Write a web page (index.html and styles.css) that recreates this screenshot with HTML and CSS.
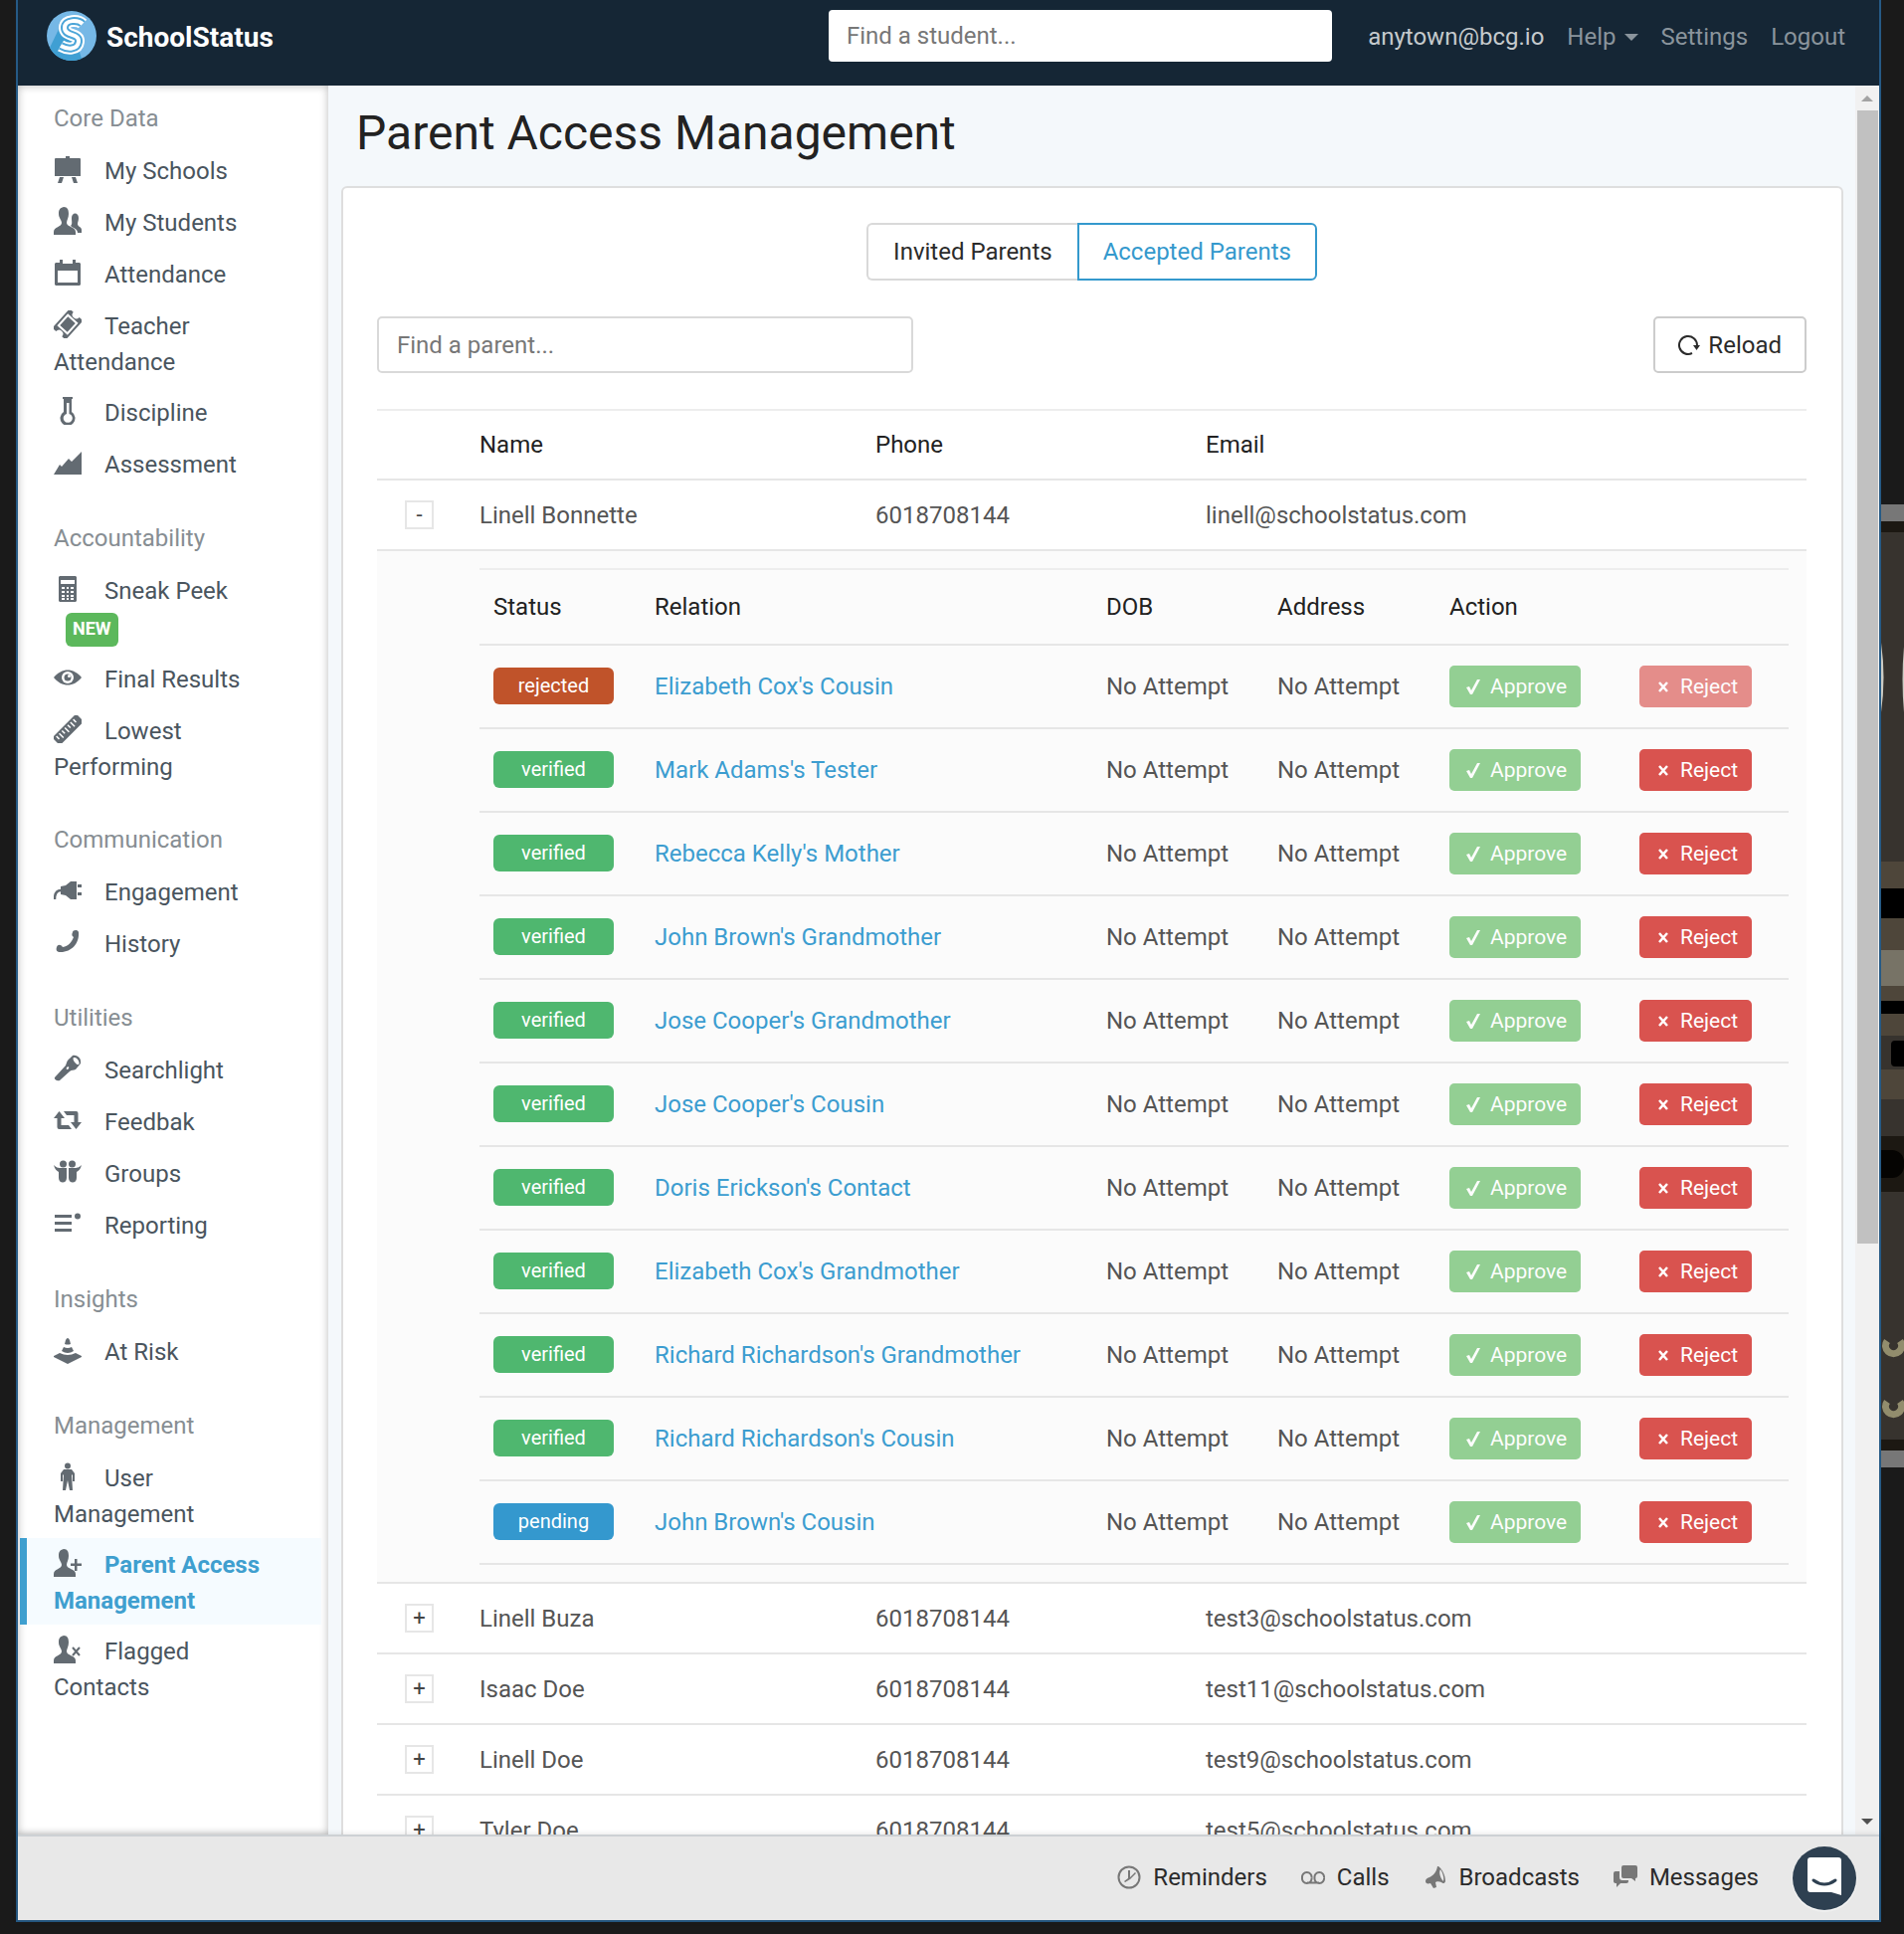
FILE: index.html
```html
<!DOCTYPE html>
<html lang="en">
<head>
<meta charset="utf-8">
<title>Parent Access Management - SchoolStatus</title>
<link rel="stylesheet" href="styles.css">
</head>
<body>
<svg class="sprite" aria-hidden="true">
  <symbol id="i-easel" viewBox="0 0 28 28"><path d="M12 1h4v2h10a1 1 0 0 1 1 1v17H1V4a1 1 0 0 1 1-1h10zM6 22h4l-2 6H4zM18 22h4l2 6h-4z"/></symbol>
  <symbol id="i-users" viewBox="0 0 28 28"><path d="M10 0c4 0 5 3 5 7 0 4-2 6-2 9 0 4 9 4 9 9v3H0v-3c0-5 8-5 8-9 0-3-3-5-3-9 0-4 1-6 5-7zM18 11c0-6 7-6 7 0 0 3-1 4-1 6 0 3 4 3 4 6v3h-4c0-4-5-5-7-7 2-2 1-4 1-8z"/></symbol>
  <symbol id="i-calendar" viewBox="0 0 28 28"><path fill-rule="evenodd" d="M6 1h3v4h10V1h3v3h4l1 1v21l-1 1H2l-1-1V5l1-1h4zM4 12v12h20V12z"/></symbol>
  <symbol id="i-ticket" viewBox="0 0 28 28"><g transform="rotate(-48 14 14)"><path fill-rule="evenodd" d="M1 5h26v5a4 4 0 0 0 0 8v5H1v-5a4 4 0 0 0 0-8zM6 7v14h16V7zM8 9h12v10H8z"/></g></symbol>
  <symbol id="i-thermo" viewBox="0 0 28 28"><path fill-rule="evenodd" d="M9 0h10v2h-1v13a7.500 7.500 0 1 1-8 0V2H9zM13 6v11a4.500 4.500 0 1 0 2.500 0V6z"/></symbol>
  <symbol id="i-chart" viewBox="0 0 28 28"><path d="M0 26l6-10 2 2 7-8 3 3L28 3v23z"/></symbol>
  <symbol id="i-calc" viewBox="0 0 28 28"><path d="M6 1h16l1 1v24l-1 1H6l-1-1V2z"/><path fill="#fff" d="M7 5h14v4H7zM8 12h3v2H8zm5 0h2v2h-2zm4 0h3v2h-3zM8 16h3v2H8zm5 0h2v2h-2zm4 0h3v2h-3zM8 20h3v2H8zm5 0h2v2h-2zm4 0h3v2h-3zM8 23h3v2H8zm5 0h2v2h-2zm4 0h3v2h-3z"/></symbol>
  <symbol id="i-eye" viewBox="0 0 28 28"><path d="M0 14C8 4 20 4 28 14C20 24 8 24 0 14z"/><circle cx="14" cy="14" r="6" fill="#fff"/><circle cx="14" cy="14" r="3.500"/><circle cx="15.500" cy="12.500" r="1.500" fill="#fff"/></symbol>
  <symbol id="i-ruler" viewBox="0 0 28 28"><g transform="rotate(-45 14 14)"><rect x="-3" y="9" width="34" height="11" rx="1"/><path stroke="#fff" stroke-width="1.500" d="M1 11v4M5 11v6M9 11v4M13 11v6M17 11v4M21 11v6M25 11v4"/></g></symbol>
  <symbol id="i-plug" viewBox="0 0 28 28"><path d="M7 10l5-1 5-4h6v18h-6l-5-4-5-1zM24 8h4v3h-4zM24 16h4v3h-4z"/><path d="M7 14c-4 0-6 3-6 9" fill="none" stroke="currentColor" stroke-width="2.500"/></symbol>
  <symbol id="i-phone" viewBox="0 0 28 28"><path d="M19 4c0-2 5-3 6 0 1 11-7 20-18 20-4 0-5-2-4-5 1-3 4-3 6 0 6-1 9-5 11-10-2-1-2-3-1-5z"/></symbol>
  <symbol id="i-torch" viewBox="0 0 28 28"><path fill-rule="evenodd" d="M1 23l11-12c1-2 1-5 4-7l3-3c5-1 9 3 8 8l-5 6c-2 1-4 0-6 2L6 26c-2 1-6-1-5-3zM20 3c-2 2 3 8 5 7s-1-8-5-7zM13 13c-1 2 1 3 2 1s-1-2-2-1z"/></symbol>
  <symbol id="i-loop" viewBox="0 0 28 28"><path d="M5.500 5l5.500 7H7.500v7H15l3 4H5.500q-2 0-2-2v-9H0zM22.500 23L17 16h3.500V9H13L10 5h12.500q2 0 2 2v9H28z"/></symbol>
  <symbol id="i-groups" viewBox="0 0 28 28"><circle cx="9.500" cy="6" r="3.500"/><circle cx="18.500" cy="6" r="3.500"/><path d="M0 7c3 3 5 3 7 3h6v10c0 6-8 6-8 0v-6C3 13 1 11 0 7zM28 7c-3 3-5 3-7 3h-6v10c0 6 8 6 8 0v-6c2-1 4-3 5-7z"/></symbol>
  <symbol id="i-report" viewBox="0 0 28 28"><path d="M1 5h17v3H1zM1 12h17v3H1zM1 19h17v3H1z"/><circle cx="24" cy="6.500" r="3"/></symbol>
  <symbol id="i-cone" viewBox="0 0 28 28"><path d="M11 8l1-4q2-4 4 0l1 4q-3 1-6 0zM8 15l2-4q4 2 8 0l2 4q-6 4-12 0zM0 20l6-3q8 4 16 0l6 3v1l-14 7L0 21z"/></symbol>
  <symbol id="i-person" viewBox="0 0 28 28"><circle cx="14" cy="3.500" r="3"/><path d="M10 7h8l3 4v8h-2v-6l-1-1 1 16h-3l-2-10-2 10H9l1-16-1 1v6H7v-8z"/></symbol>
  <symbol id="i-user-add" viewBox="0 0 28 28"><path d="M10 0c4 0 5 3 5 7 0 4-2 6-2 9 0 4 9 4 9 9v3H0v-3c0-5 8-5 8-9 0-3-3-5-3-9 0-4 1-6 5-7zM21 10h2.500v4.500H28V17h-4.500v5H21v-5h-4v-2.500h4z"/></symbol>
  <symbol id="i-user-x" viewBox="0 0 28 28"><path d="M10 0c4 0 5 3 5 7 0 4-2 6-2 9 0 4 9 4 9 9v3H0v-3c0-5 8-5 8-9 0-3-3-5-3-9 0-4 1-6 5-7z"/><path d="M19 12l7 8M26 12l-7 8" stroke="currentColor" stroke-width="2"/></symbol>
  <symbol id="i-reload" viewBox="0 0 22 22"><path d="M14 19A9 9 0 1 1 19 11" fill="none" stroke="currentColor" stroke-width="2"/><path d="M15 11h7l-3.500 5z"/></symbol>
  <symbol id="i-check" viewBox="0 0 16 16"><path d="M1 9l3-1 2 4L12 1l3 0L7 16H5z"/></symbol>
  <symbol id="i-x" viewBox="0 0 16 16"><path d="M4 4l8 9M12 4l-8 9" stroke="currentColor" stroke-width="2.500"/></symbol>
  <symbol id="i-clock" viewBox="0 0 24 24"><circle cx="12" cy="12" r="10.500" fill="none" stroke="currentColor" stroke-width="2"/><path d="M11 5h2v7l5-5 1 1-6 6-5 3-1-1 4-3z"/></symbol>
  <symbol id="i-voicemail" viewBox="0 0 24 24"><path d="M6 17.500h12M10.500 12.500a4.800 4.800 0 1 0-9.500 0 4.800 4.800 0 1 0 9.500 0M23 12.500a4.800 4.800 0 1 0-9.500 0 4.800 4.800 0 1 0 9.500 0" fill="none" stroke="currentColor" stroke-width="2"/></symbol>
  <symbol id="i-horn" viewBox="0 0 24 24"><path fill-rule="evenodd" d="M15 1c4 3 7 9 7 15-1 3-3 2-4 1-2-1-5-1-6 0l1 5-3 1-3-5c-3 1-5 0-5-2s1-3 4-4c4-2 7-5 8-11zM17 4c-2 3 0 9 3 12 1-4-1-9-3-12z"/></symbol>
  <symbol id="i-chats" viewBox="0 0 24 24"><path d="M10 0h12q2 0 2 2v9q0 2-2 2v3l-4-3h-8q-2 0-2-2V2q0-2 2-2z"/><path d="M2 6h4v6q0 3 3 3h6v1q0 2-2 2H7l-4 4v-4q-3 0-3-2V8q0-2 2-2z"/></symbol>
</svg>

<div class="desktop">
  <div class="window">
    <header class="topbar">
      <a class="brand" href="#">
        <svg viewBox="0 0 50 50" aria-hidden="true">
          <circle cx="25" cy="25" r="25" fill="#76b8e6"/>
          <path d="M15 12L3 37a25 25 0 0 0 32 11l-3-10z" fill="#3f9fd3"/>
          <g fill="none">
            <path d="M36 13C32 9 18 8 18 17C18 26 33 22 32 31C31 39 21 39 14 35" stroke="#fff" stroke-width="12"/>
            <path d="M36 13C32 9 18 8 18 17C18 26 33 22 32 31C31 39 21 39 14 35" stroke="#4ba5d8" stroke-width="8"/>
            <path d="M36 13C32 9 18 8 18 17C18 26 33 22 32 31C31 39 21 39 14 35" stroke="#fff" stroke-width="4"/>
          </g>
        </svg>
        <span>SchoolStatus</span>
      </a>
      <input class="student-search" type="text" placeholder="Find a student..." aria-label="Find a student">
      <nav class="account">
        <a class="account-user" href="#">anytown@bcg.io</a>
        <a class="account-help" href="#">Help</a>
        <a href="#">Settings</a>
        <a href="#">Logout</a>
      </nav>
    </header>

    <div class="body">
      <nav class="sidebar">
        <h2>Core Data</h2>
        <a href="#"><svg><use href="#i-easel"/></svg>My Schools</a>
        <a href="#"><svg><use href="#i-users"/></svg>My Students</a>
        <a href="#"><svg><use href="#i-calendar"/></svg>Attendance</a>
        <a href="#"><svg><use href="#i-ticket"/></svg>Teacher Attendance</a>
        <a href="#"><svg><use href="#i-thermo"/></svg>Discipline</a>
        <a href="#"><svg><use href="#i-chart"/></svg>Assessment</a>
        <h2>Accountability</h2>
        <a href="#"><svg><use href="#i-calc"/></svg>Sneak Peek <span class="new">NEW</span></a>
        <a href="#"><svg><use href="#i-eye"/></svg>Final Results</a>
        <a href="#"><svg><use href="#i-ruler"/></svg>Lowest Performing</a>
        <h2>Communication</h2>
        <a href="#"><svg><use href="#i-plug"/></svg>Engagement</a>
        <a href="#"><svg><use href="#i-phone"/></svg>History</a>
        <h2>Utilities</h2>
        <a href="#"><svg><use href="#i-torch"/></svg>Searchlight</a>
        <a href="#"><svg><use href="#i-loop"/></svg>Feedbak</a>
        <a href="#"><svg><use href="#i-groups"/></svg>Groups</a>
        <a href="#"><svg><use href="#i-report"/></svg>Reporting</a>
        <h2>Insights</h2>
        <a href="#"><svg><use href="#i-cone"/></svg>At Risk</a>
        <h2>Management</h2>
        <a href="#"><svg><use href="#i-person"/></svg>User Management</a>
        <a class="active" href="#"><svg><use href="#i-user-add"/></svg>Parent Access Management</a>
        <a href="#"><svg><use href="#i-user-x"/></svg>Flagged Contacts</a>
      </nav>

      <main class="content">
        <h1>Parent Access Management</h1>
        <section class="card">
          <div class="tabs">
            <button type="button">Invited Parents</button>
            <button type="button" class="selected">Accepted Parents</button>
          </div>
          <div class="tools">
            <input type="text" placeholder="Find a parent..." aria-label="Find a parent">
            <button type="button"><svg><use href="#i-reload"/></svg>Reload</button>
          </div>
          <table class="parents">
            <thead>
              <tr><th class="c-toggle"></th><th class="c-name">Name</th><th class="c-phone">Phone</th><th>Email</th></tr>
            </thead>
            <tbody>
              <tr><td><button type="button" class="toggle">-</button></td><td>Linell Bonnette</td><td>6018708144</td><td>linell@schoolstatus.com</td></tr>
              <tr class="detail"><td colspan="4">
                <table class="relations">
                  <thead>
                    <tr><th class="c-status">Status</th><th>Relation</th><th class="c-dob">DOB</th><th class="c-address">Address</th><th class="c-approve">Action</th><th class="c-reject"></th></tr>
                  </thead>
                  <tbody>
                    <tr><td><span class="status rejected">rejected</span></td><td><a href="#">Elizabeth Cox's Cousin</a></td><td>No Attempt</td><td>No Attempt</td><td><button type="button" class="approve" disabled><svg><use href="#i-check"/></svg>Approve</button></td><td><button type="button" class="reject" disabled><svg><use href="#i-x"/></svg>Reject</button></td></tr>
                    <tr><td><span class="status verified">verified</span></td><td><a href="#">Mark Adams's Tester</a></td><td>No Attempt</td><td>No Attempt</td><td><button type="button" class="approve" disabled><svg><use href="#i-check"/></svg>Approve</button></td><td><button type="button" class="reject"><svg><use href="#i-x"/></svg>Reject</button></td></tr>
                    <tr><td><span class="status verified">verified</span></td><td><a href="#">Rebecca Kelly's Mother</a></td><td>No Attempt</td><td>No Attempt</td><td><button type="button" class="approve" disabled><svg><use href="#i-check"/></svg>Approve</button></td><td><button type="button" class="reject"><svg><use href="#i-x"/></svg>Reject</button></td></tr>
                    <tr><td><span class="status verified">verified</span></td><td><a href="#">John Brown's Grandmother</a></td><td>No Attempt</td><td>No Attempt</td><td><button type="button" class="approve" disabled><svg><use href="#i-check"/></svg>Approve</button></td><td><button type="button" class="reject"><svg><use href="#i-x"/></svg>Reject</button></td></tr>
                    <tr><td><span class="status verified">verified</span></td><td><a href="#">Jose Cooper's Grandmother</a></td><td>No Attempt</td><td>No Attempt</td><td><button type="button" class="approve" disabled><svg><use href="#i-check"/></svg>Approve</button></td><td><button type="button" class="reject"><svg><use href="#i-x"/></svg>Reject</button></td></tr>
                    <tr><td><span class="status verified">verified</span></td><td><a href="#">Jose Cooper's Cousin</a></td><td>No Attempt</td><td>No Attempt</td><td><button type="button" class="approve" disabled><svg><use href="#i-check"/></svg>Approve</button></td><td><button type="button" class="reject"><svg><use href="#i-x"/></svg>Reject</button></td></tr>
                    <tr><td><span class="status verified">verified</span></td><td><a href="#">Doris Erickson's Contact</a></td><td>No Attempt</td><td>No Attempt</td><td><button type="button" class="approve" disabled><svg><use href="#i-check"/></svg>Approve</button></td><td><button type="button" class="reject"><svg><use href="#i-x"/></svg>Reject</button></td></tr>
                    <tr><td><span class="status verified">verified</span></td><td><a href="#">Elizabeth Cox's Grandmother</a></td><td>No Attempt</td><td>No Attempt</td><td><button type="button" class="approve" disabled><svg><use href="#i-check"/></svg>Approve</button></td><td><button type="button" class="reject"><svg><use href="#i-x"/></svg>Reject</button></td></tr>
                    <tr><td><span class="status verified">verified</span></td><td><a href="#">Richard Richardson's Grandmother</a></td><td>No Attempt</td><td>No Attempt</td><td><button type="button" class="approve" disabled><svg><use href="#i-check"/></svg>Approve</button></td><td><button type="button" class="reject"><svg><use href="#i-x"/></svg>Reject</button></td></tr>
                    <tr><td><span class="status verified">verified</span></td><td><a href="#">Richard Richardson's Cousin</a></td><td>No Attempt</td><td>No Attempt</td><td><button type="button" class="approve" disabled><svg><use href="#i-check"/></svg>Approve</button></td><td><button type="button" class="reject"><svg><use href="#i-x"/></svg>Reject</button></td></tr>
                    <tr><td><span class="status pending">pending</span></td><td><a href="#">John Brown's Cousin</a></td><td>No Attempt</td><td>No Attempt</td><td><button type="button" class="approve" disabled><svg><use href="#i-check"/></svg>Approve</button></td><td><button type="button" class="reject"><svg><use href="#i-x"/></svg>Reject</button></td></tr>
                  </tbody>
                </table>
              </td></tr>
              <tr><td><button type="button" class="toggle">+</button></td><td>Linell Buza</td><td>6018708144</td><td>test3@schoolstatus.com</td></tr>
              <tr><td><button type="button" class="toggle">+</button></td><td>Isaac Doe</td><td>6018708144</td><td>test11@schoolstatus.com</td></tr>
              <tr><td><button type="button" class="toggle">+</button></td><td>Linell Doe</td><td>6018708144</td><td>test9@schoolstatus.com</td></tr>
              <tr><td><button type="button" class="toggle">+</button></td><td>Tyler Doe</td><td>6018708144</td><td>test5@schoolstatus.com</td></tr>
            </tbody>
          </table>
        </section>
      </main>

      <div class="scrollbar" aria-hidden="true">
        <svg class="arrow up" viewBox="0 0 24 25"><path d="M6 16h12l-6-6z"/></svg>
        <div class="track"><div class="thumb"></div></div>
        <svg class="arrow down" viewBox="0 0 24 25"><path d="M6 9h12l-6 6z"/></svg>
      </div>
    </div>

    <footer class="dock">
      <a href="#"><svg><use href="#i-clock"/></svg>Reminders</a>
      <a href="#"><svg><use href="#i-voicemail"/></svg>Calls</a>
      <a href="#"><svg><use href="#i-horn"/></svg>Broadcasts</a>
      <a href="#"><svg><use href="#i-chats"/></svg>Messages</a>
      <button type="button" class="chat" aria-label="Open chat">
        <svg viewBox="0 0 64 64"><path fill="#fff" d="M18 11h28q3 0 3 3v35l-10-3H18q-3 0-3-3V14q0-3 3-3z"/><path d="M21 34q11 8 22 0" fill="none" stroke="#2e4051" stroke-width="3" stroke-linecap="round"/></svg>
      </button>
    </footer>
  </div>

  <svg class="backdrop" viewBox="0 0 23 1944" preserveAspectRatio="none" aria-hidden="true">
    <path fill="#777" d="M0 507h23v17H0zM0 1458h23v17H0z"/>
    <path fill="#1c1812" d="M0 524h23v934H0z"/>
    <path fill="#37332e" d="M0 535h23v912H0z"/>
    <path fill="#4e463a" d="M0 866h23v239H0z"/>
    <path fill="#000" d="M0 893h23v30H0zM0 1006h23v13H0z"/>
    <path fill="#777366" d="M0 955h23v36H0z"/>
    <path fill="#37332e" d="M0 1041h23v34H0z"/>
    <rect x="10" y="1046" width="20" height="26" rx="4" fill="#000"/>
    <path fill="#1c1812" d="M0 1142h23v56H0z"/>
    <rect x="-20" y="1156" width="43" height="28" rx="12" fill="#050402"/>
    <path fill="#ccccc4" d="M0 646q5 35 0 70zM23 650q-3 33 0 66z"/>
    <path d="M6 1348a8 8 0 1 0 13 0M6 1409a8 8 0 1 0 13 0" fill="none" stroke="#928d6d" stroke-width="7"/>
  </svg>
</div>
</body>
</html>
```
FILE: styles.css
```css
* {
  box-sizing: border-box;
}

body {
  margin: 0;
  background: #1a1a1a;
  color: #555;
  font-family: Roboto, "Liberation Sans", sans-serif;
  font-size: 24px;
  line-height: 36px;
}

a {
  color: inherit;
  text-decoration: none;
}

button,
input {
  font: inherit;
  border-radius: 5px;
}

svg {
  fill: currentColor;
}

.sprite {
  display: none;
}

.desktop {
  display: grid;
  grid-template-columns: minmax(0, 1fr) 23px;
  height: 100vh;
  padding-left: 16px;
}

.backdrop {
  width: 23px;
  height: 100vh;
}

.window {
  display: flex;
  flex-direction: column;
  min-height: 0;
  margin-bottom: 12px;
  border: solid #265a85;
  border-width: 0 2px 2px;
  background: #f4f8fb;
}

/* Top bar */
.topbar {
  display: flex;
  flex: none;
  align-items: center;
  height: 86px;
  padding: 0 34px 14px 29px;
  background: #152635;
}

.brand {
  display: flex;
  align-items: center;
  gap: 10px;
  margin-right: auto;
  color: #fff;
  font-size: 28px;
  font-weight: 700;
}

.brand svg {
  width: 50px;
  height: 50px;
}

.brand span {
  padding-top: 3px;
}

.student-search {
  width: 28%;
  height: 52px;
  margin-right: 36px;
  padding: 0 18px;
  border: 0;
  border-radius: 4px;
}

::placeholder {
  color: #777;
  opacity: 1;
}

.account {
  display: flex;
  gap: 23px;
  padding-top: 2px;
  color: #8a949c;
}

.account-user {
  color: #c5cacd;
}

.account-help::after {
  content: "";
  display: inline-block;
  margin-left: 8px;
  border: 7px solid transparent;
  border-top-color: currentColor;
  border-bottom: 0;
  vertical-align: 4px;
}

/* Body */
.body {
  display: grid;
  flex: 1;
  grid-template-columns: 312px minmax(0, 1fr) 24px;
  grid-template-rows: minmax(0, 1fr);
  min-height: 0;
  overflow: hidden;
}

.sidebar {
  padding: 15px 7px 0 2px;
  overflow: hidden;
  background: #fff;
  box-shadow: inset 0 0 8px rgba(0, 0, 0, 0.28);
  color: #4a555e;
}

.sidebar h2 {
  margin: 31px 0 8px 34px;
  color: #878e93;
  font-size: 24px;
  font-weight: 400;
}

.sidebar h2:first-child {
  margin-top: 0;
}

.sidebar a {
  display: block;
  min-height: 52px;
  padding: 9px 40px 6px 27px;
  border-left: 7px solid transparent;
}

.sidebar a.active {
  border-left-color: #3f9fcf;
  background: #f5fbff;
  color: #3f9fcf;
  font-weight: 700;
}

.sidebar svg {
  width: 28px;
  height: 28px;
  margin-right: 23px;
  color: #636b72;
  vertical-align: -4px;
}

.new {
  display: inline-block;
  height: 34px;
  margin: 2px 0 0 12px;
  padding: 0 7px;
  border-radius: 6px;
  background: #5cb85c;
  color: #fff;
  font-size: 18px;
  font-weight: 700;
  line-height: 32px;
  vertical-align: middle;
}

.content {
  padding: 20px 12px 0 13px;
  overflow: hidden;
}

h1 {
  margin: 0 15px 25px;
  color: #222;
  font-size: 48px;
  font-weight: 400;
  line-height: 56px;
}

.card {
  padding: 35px 35px 35px 34px;
  border: 2px solid #dedede;
  border-radius: 6px;
  background: #fff;
}

.tabs {
  display: flex;
  justify-content: center;
  margin-bottom: 36px;
}

.tabs button {
  height: 58px;
  padding: 0 25px;
  border: 2px solid #d9d9d9;
  border-right: 0;
  border-radius: 6px 0 0 6px;
  background: #fff;
  color: #2b2b2b;
}

.tabs .selected {
  padding: 0 24px;
  border: 2px solid #3499cd;
  border-radius: 0 6px 6px 0;
  color: #3499cd;
}

.tools {
  display: flex;
  justify-content: space-between;
  margin-bottom: 36px;
}

.tools input {
  width: 38%;
  max-width: 539px;
  height: 57px;
  padding: 0 18px;
  border: 2px solid #d9d9d9;
}

.tools button {
  display: flex;
  align-items: center;
  gap: 8px;
  height: 57px;
  padding: 0 23px;
  border: 2px solid #ccc;
  background: #fff;
  color: #2b2b2b;
}

.tools svg {
  width: 22px;
  height: 22px;
}

/* Tables */
table {
  width: 100%;
  border-top: 2px solid #ededed;
  border-spacing: 0;
  table-layout: fixed;
}

th,
td {
  height: 71px;
  padding: 0;
  border-bottom: 2px solid #e6e6e6;
  text-align: left;
}

th {
  height: 70px;
  color: #222;
  font-weight: 400;
}

.c-toggle { width: 103px; }
.c-name { width: 398px; }
.c-phone { width: 332px; }

.toggle {
  display: block;
  width: 29px;
  height: 29px;
  margin-left: 28px;
  padding: 0;
  border: 2px solid #e6e6e6;
  border-radius: 0;
  background: #fff;
  color: #444;
  font-size: 22px;
  line-height: 25px;
}

.detail > td {
  padding: 17px 18px 17px 103px;
  background: #fbfbfb;
}

.relations th,
.relations td {
  height: 84px;
  padding: 0 14px 1px;
}

.relations th { height: 76px; }
.c-status { width: 162px; }
.c-dob { width: 172px; }
.c-address { width: 173px; }
.c-approve { width: 191px; }
.c-reject { width: 164px; }

.relations a {
  color: #3c9dd0;
}

.status {
  display: block;
  width: 121px;
  height: 37px;
  border-radius: 6px;
  color: #fff;
  font-size: 20px;
  line-height: 36px;
  text-align: center;
}

.rejected { background: #c0532a; }
.verified { background: #4fb76f; }
.pending { background: #3498ce; }

.approve,
.reject {
  display: flex;
  align-items: center;
  gap: 9px;
  height: 42px;
  padding: 0 14px 0 16px;
  border: 0;
  color: #fff;
  font-size: 21px;
}

.approve { background: #5cb85c; }
.reject { background: #d9534f; }

.approve:disabled,
.reject:disabled {
  opacity: 0.65;
}

.approve svg,
.reject svg {
  width: 16px;
  height: 16px;
}

/* Scroll bar */
.scrollbar {
  display: flex;
  flex-direction: column;
  background: #f1f1f1;
}

.arrow {
  width: 24px;
  height: 25px;
}

.up { color: #a3a3a3; }
.down { color: #505050; }

.track {
  flex: 1;
  padding: 0 1px 0 2px;
}

.thumb {
  height: calc(100% * 2 / 3);
  background: #c1c1c1;
}

/* Dock */
.dock {
  display: flex;
  flex: none;
  align-items: center;
  justify-content: flex-end;
  gap: 34px;
  height: 86px;
  padding-right: 23px;
  border-top: 2px solid #cdd1d4;
  background: #e8e8e8;
  box-shadow: 0 0 6px rgba(0, 0, 0, 0.12);
  color: #2b2b2b;
}

.dock a {
  display: flex;
  align-items: center;
  gap: 12px;
  padding-bottom: 2px;
}

.dock a svg {
  width: 24px;
  height: 24px;
  color: #777;
}

.chat {
  width: 64px;
  height: 64px;
  padding: 0;
  border: 0;
  border-radius: 50%;
  background: #2e4051;
  box-shadow: 0 1px 2px #fff;
}

.chat svg {
  display: block;
  width: 64px;
  height: 64px;
}
```
